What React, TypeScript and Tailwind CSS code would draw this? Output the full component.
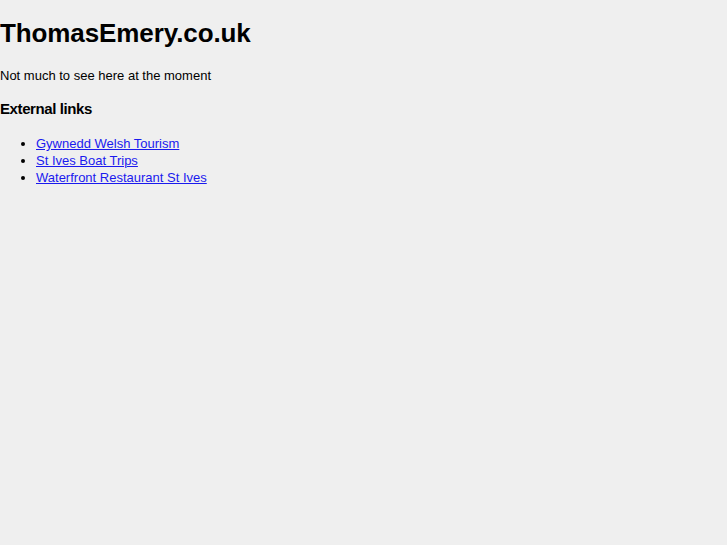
export default function App() {
  return (
    <div className="min-h-[545px] bg-[#efefef] text-black" style={{ fontFamily: '"Liberation Sans", Arial, sans-serif' }}>
      <h1 className="text-[26px] font-bold leading-[30px] pt-[18px] m-0 tracking-[-0.1px]">ThomasEmery.co.uk</h1>
      <p className="text-[13px] leading-[17px] mt-[19px]">Not much to see here at the moment</p>
      <h3 className="text-[15px] font-bold leading-[19px] mt-[15px] tracking-[-0.4px]">External links</h3>
      <ul className="list-disc pl-[36px] mt-[17px] text-[13px] leading-[17px]">
        <li><a href="#" className="text-[#1a1aee] underline">Gywnedd Welsh Tourism </a></li>
        <li><a href="#" className="text-[#1a1aee] underline">St Ives Boat Trips</a></li>
        <li><a href="#" className="text-[#1a1aee] underline">Waterfront Restaurant St Ives</a></li>
      </ul>
    </div>
  );
}
